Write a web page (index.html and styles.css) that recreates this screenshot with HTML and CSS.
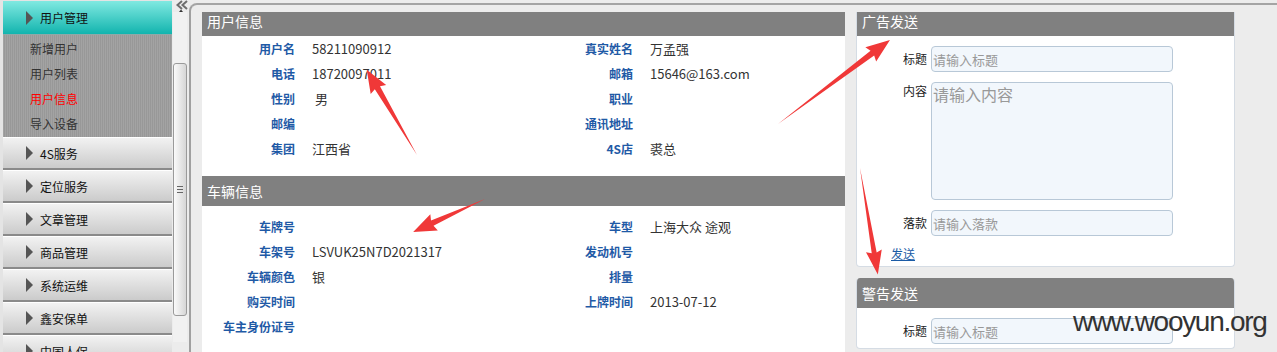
FILE: index.html
```html
<!DOCTYPE html>
<html lang="zh-CN">
<head>
    <meta charset="UTF-8">
    <title>用户信息</title>
    <link rel="stylesheet" href="styles.css">
</head>
<body>
<div class="page">
    <aside class="sidebar">
        <div class="menu-item active"><span class="tri"></span>用户管理</div>
        <ul class="submenu">
            <li>新增用户</li>
            <li>用户列表</li>
            <li class="current">用户信息</li>
            <li>导入设备</li>
        </ul>
        <div class="menu-item"><span class="tri"></span>4S服务</div>
        <div class="menu-item"><span class="tri"></span>定位服务</div>
        <div class="menu-item"><span class="tri"></span>文章管理</div>
        <div class="menu-item"><span class="tri"></span>商品管理</div>
        <div class="menu-item"><span class="tri"></span>系统运维</div>
        <div class="menu-item"><span class="tri"></span>鑫安保单</div>
        <div class="menu-item"><span class="tri"></span>中国人保</div>
    </aside>

    <div class="splitter">
        <svg class="collapse" width="14" height="12" viewBox="0 0 14 12">
            <path d="M7 1 L2.5 5 L7 9 M12 1 L7.5 5 L12 9" stroke="#6d6d6d" stroke-width="2" fill="none"/>
            <path d="M4 12 L6 9.5 L8 12 Z" fill="#333"/>
        </svg>
        <div class="scrollbar">
            <div class="thumb"><span class="grip"></span></div>
        </div>
    </div>

    <main class="main">
        <div class="viewport">
            <div class="content">
                <section class="info-panel">
                    <h2 class="panel-title">用户信息</h2>
                    <div class="info-grid user">
                        <div class="k">用户名</div><div class="v">58211090912</div>
                        <div class="k">真实姓名</div><div class="v">万孟强</div>
                        <div class="k">电话</div><div class="v">18720097011</div>
                        <div class="k">邮箱</div><div class="v">15646@163.com</div>
                        <div class="k">性别</div><div class="v">&nbsp;男</div>
                        <div class="k">职业</div><div class="v"></div>
                        <div class="k">邮编</div><div class="v"></div>
                        <div class="k">通讯地址</div><div class="v"></div>
                        <div class="k">集团</div><div class="v">江西省</div>
                        <div class="k">4S店</div><div class="v">裘总</div>
                    </div>

                    <h2 class="panel-title">车辆信息</h2>
                    <div class="info-grid car">
                        <div class="k">车牌号</div><div class="v"></div>
                        <div class="k">车型</div><div class="v">上海大众 途观</div>
                        <div class="k">车架号</div><div class="v">LSVUK25N7D2021317</div>
                        <div class="k">发动机号</div><div class="v"></div>
                        <div class="k">车辆颜色</div><div class="v">银</div>
                        <div class="k">排量</div><div class="v"></div>
                        <div class="k">购买时间</div><div class="v"></div>
                        <div class="k">上牌时间</div><div class="v">2013-07-12</div>
                        <div class="k">车主身份证号</div><div class="v"></div>
                    </div>
                </section>

                <div class="side">
                    <section class="box">
                        <h2 class="panel-title">广告发送</h2>
                        <form class="send-form">
                            <label>标题</label><input type="text" placeholder="请输入标题">
                            <label class="top">内容</label><textarea placeholder="请输入内容"></textarea>
                            <label>落款</label><input type="text" placeholder="请输入落款">
                            <a href="#" class="send">发送</a>
                        </form>
                    </section>
                    <section class="box">
                        <h2 class="panel-title">警告发送</h2>
                        <form class="send-form">
                            <label>标题</label><input type="text" placeholder="请输入标题">
                        </form>
                    </section>
                </div>
            </div>
        </div>
    </main>

    <!-- 标注箭头 -->
    <svg class="marks" width="1277" height="352">
        <g fill="#f03838">
            <polygon transform="translate(417,155) rotate(-120.5)" points="0,0 78,-3 76,-9 99,0 76,9 78,3"/>
            <polygon transform="translate(485,199) rotate(155.4)" points="0,0 58,-3 56,-9 79,0 56,9 58,3"/>
            <polygon transform="translate(778,124) rotate(-36.9)" points="0,0 118,-3 116,-9 140,0 116,9 118,3"/>
            <polygon transform="translate(860,168) rotate(80.5)" points="0,0 86,-2.5 84,-8 108,0 84,8 86,2.5"/>
        </g>
    </svg>
    <div class="watermark">www.wooyun.org</div>
</div>
</body>
</html>
```

FILE: styles.css
```css
html, body {
    margin: 0;
    padding: 0;
}
body {
    font-family: "Noto Sans CJK SC", "Microsoft YaHei", sans-serif;
    font-size: 12px;
    color: #333;
    background-color: #ececec;
}
.page {
    position: relative;
    display: flex;
    width: 1277px;
    height: 352px;
    overflow: hidden;
}

/* 左侧菜单 */
.sidebar {
    width: 169px;
    flex: none;
    padding: 1px 0 0 3px;
    background-color: #e4e4e4;
}
.menu-item {
    display: flex;
    align-items: center;
    height: 30px;
    padding-left: 23px;
    border-top: 1px solid #fff;
    border-bottom: 2px solid #8a8a8a;
    background: linear-gradient(#f2f2f2, #cbcbcb);
    color: #111;
    font-size: 12px;
}
.menu-item.active {
    height: 33px;
    border-top: 0;
    border-bottom: 1px solid #8fa9a8;
    background: linear-gradient(#80e9e1, #12b4ae);
}
.tri {
    width: 0;
    height: 0;
    margin-right: 7px;
    border-left: 7px solid #555;
    border-top: 7px solid transparent;
    border-bottom: 7px solid transparent;
}
.submenu {
    list-style: none;
    margin: 0;
    padding: 1px 0 1px 0;
    background: repeating-linear-gradient(90deg, #a3a3a3 0 1px, #989898 1px 2px);
}
.submenu li {
    height: 25px;
    line-height: 25px;
    padding-left: 27px;
    color: #333;
}
.submenu li.current {
    color: #f00;
}

/* 分隔条 */
.splitter {
    width: 17px;
    flex: none;
    background-color: #ececec;
}
.collapse {
    display: block;
    margin-left: 3px;
}
.scrollbar {
    width: 14px;
    height: 330px;
    margin-left: 1px;
    padding-top: 51px;
    box-sizing: border-box;
    background-color: #f1f1f1;
}
.thumb {
    display: flex;
    align-items: center;
    justify-content: center;
    height: 253px;
    box-sizing: border-box;
    border: 1px solid #9a9a9a;
    border-radius: 3px;
    background: linear-gradient(90deg, #fafafa, #d6d6d6);
}
.grip {
    width: 6px;
    height: 7px;
    background: repeating-linear-gradient(#666 0 1px, transparent 1px 3px);
}

/* 主区域 */
.main {
    flex: 1;
    display: flex;
    flex-direction: column;
    margin-top: 3px;
    padding: 7px 0 0 11px;
    border-top: 2px solid #a4a4a4;
    border-left: 2px solid #a0a0a0;
    border-top-left-radius: 8px;
    background-color: #ececec;
}
.viewport {
    flex: 1;
    overflow: hidden;
}
.content {
    display: flex;
    align-items: flex-start;
    gap: 11px;
    margin-top: -6px;
}
.panel-title {
    margin: 0;
    height: 30px;
    line-height: 30px;
    padding-left: 5px;
    background-color: #808080;
    color: #fff;
    font-size: 14px;
    font-weight: normal;
}
.info-panel {
    width: 643px;
    height: 400px;
    background-color: #fff;
}
.info-grid {
    display: grid;
    grid-template-columns: 100px 238px 100px 1fr;
    grid-auto-rows: 25px;
    align-items: center;
}
.info-grid.user {
    padding-bottom: 15px;
}
.info-grid.car {
    padding-top: 8px;
}
.k {
    text-align: right;
    padding-right: 7px;
    color: #1f5aa6;
    font-weight: bold;
}
.v {
    padding-left: 10px;
    font-size: 13px;
    color: #333;
}

/* 右侧发送框 */
.side {
    display: flex;
    flex-direction: column;
    gap: 11px;
    width: 379px;
}
.box {
    background-color: #fff;
    border: 1px solid #d5dce4;
    border-top: 0;
    border-radius: 4px;
    overflow: hidden;
}
.send-form {
    display: grid;
    grid-template-columns: 70px 242px;
    column-gap: 4px;
    row-gap: 10px;
    padding: 10px 0 4px 0;
}
.send-form label {
    text-align: right;
    line-height: 18px;
    padding-top: 4px;
    color: #222;
}
.send-form label.top {
    padding-top: 0;
}
.send-form input, .send-form textarea {
    box-sizing: border-box;
    width: 242px;
    margin: 0;
    padding: 0 1px;
    border: 1px solid #b8c8d7;
    border-radius: 4px;
    background-color: #f2f7fc;
    font-family: inherit;
    color: #333;
    outline: none;
}
.send-form input {
    height: 26px;
    font-size: 13px;
}
.send-form textarea {
    height: 118px;
    font-size: 16px;
    line-height: 23px;
    resize: none;
}
.send-form input::placeholder, .send-form textarea::placeholder {
    color: #999;
}
.send {
    grid-column: 1 / -1;
    padding-left: 34px;
    line-height: 16px;
    color: #1a5ba6;
}

/* 标注 */
.marks {
    position: absolute;
    top: 0;
    left: 0;
    pointer-events: none;
}
.watermark {
    position: absolute;
    left: 1073px;
    top: 308px;
    font-family: "Liberation Sans", Arial, sans-serif;
    font-size: 28px;
    line-height: 28px;
    letter-spacing: -1.3px;
    color: #333;
}
```
